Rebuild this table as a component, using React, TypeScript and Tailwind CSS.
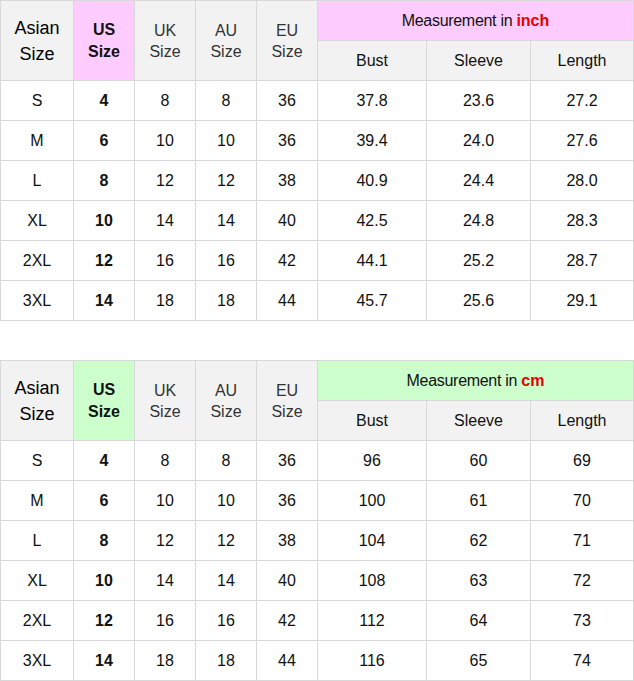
const inchRows = [
  ["S", "4", "8", "8", "36", "37.8", "23.6", "27.2"],
  ["M", "6", "10", "10", "36", "39.4", "24.0", "27.6"],
  ["L", "8", "12", "12", "38", "40.9", "24.4", "28.0"],
  ["XL", "10", "14", "14", "40", "42.5", "24.8", "28.3"],
  ["2XL", "12", "16", "16", "42", "44.1", "25.2", "28.7"],
  ["3XL", "14", "18", "18", "44", "45.7", "25.6", "29.1"],
];

const cmRows = [
  ["S", "4", "8", "8", "36", "96", "60", "69"],
  ["M", "6", "10", "10", "36", "100", "61", "70"],
  ["L", "8", "12", "12", "38", "104", "62", "71"],
  ["XL", "10", "14", "14", "40", "108", "63", "72"],
  ["2XL", "12", "16", "16", "42", "112", "64", "73"],
  ["3XL", "14", "18", "18", "44", "116", "65", "74"],
];

interface TableProps {
  unit: string;
  accent: string; // bg class for highlighted cells
  rows: string[][];
}

const SizeTable = ({ unit, accent, rows }: TableProps) => {
  const head = "bg-[#f2f2f2] flex items-center justify-center text-center";
  return (
    <div className="grid grid-cols-[72px_60px_60px_60px_60px_108px_103px_102px] grid-rows-[repeat(8,39px)] gap-px p-px bg-[#d8d8d8] w-[634px]">
      <div className={`${head} row-span-2 text-[18px] leading-[26px] text-black`}>
        Asian
        <br />
        Size
      </div>
      <div className={`${accent} row-span-2 flex items-center justify-center text-center font-bold text-[16px] leading-[22px] text-[#111]`}>
        US
        <br />
        Size
      </div>
      {["UK", "AU", "EU"].map((s) => (
        <div key={s} className={`${head} row-span-2 text-[16px] leading-[21px] text-[#333]`}>
          {s}
          <br />
          Size
        </div>
      ))}
      <div className={`${accent} col-span-3 flex items-center justify-center text-[16px] tracking-[-0.3px] text-[#111]`}>
        Measurement in&nbsp;<span className="font-bold text-[#e60000] tracking-normal">{unit}</span>
      </div>
      {["Bust", "Sleeve", "Length"].map((s) => (
        <div key={s} className={`${head} text-[16px] text-[#111]`}>
          {s}
        </div>
      ))}
      {rows.map((r, i) =>
        r.map((v, j) => (
          <div
            key={i + "-" + j}
            className={
              "bg-white flex items-center justify-center text-[16px] text-[#111] " +
              (j === 1 ? "font-bold" : "")
            }
          >
            {v}
          </div>
        ))
      )}
    </div>
  );
};

export default function App() {
  return (
    <div className="w-[634px] h-[681px] bg-white font-['Liberation_Sans',Arial,sans-serif] flex flex-col gap-[39px]">
      <SizeTable unit="inch" accent="bg-[#ffccff]" rows={inchRows} />
      <SizeTable unit="cm" accent="bg-[#ccffcc]" rows={cmRows} />
    </div>
  );
}
